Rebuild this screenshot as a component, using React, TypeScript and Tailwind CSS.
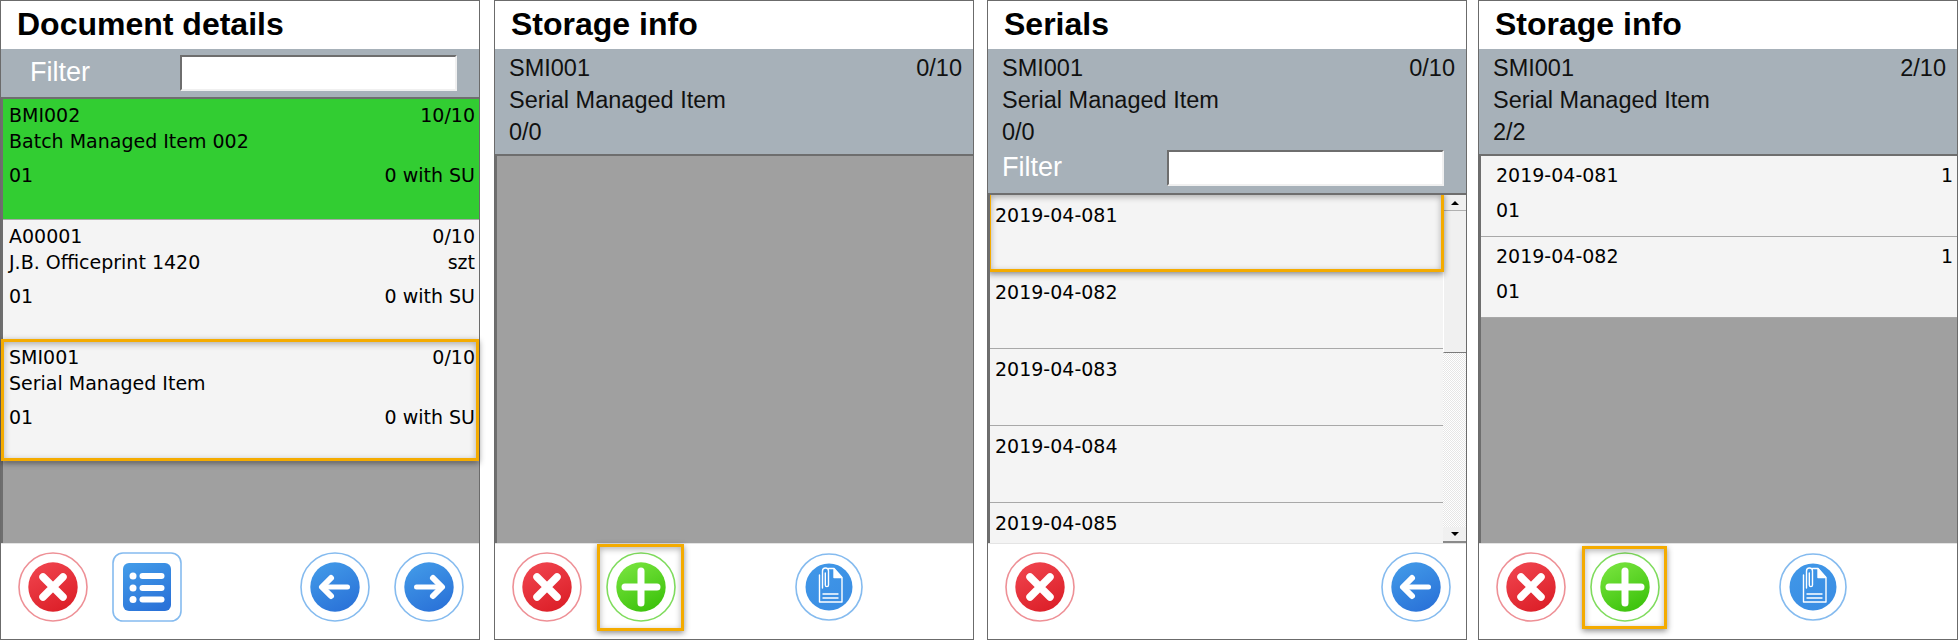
import type { ReactNode } from "react";

const tahoma = "font-['DejaVu_Sans',sans-serif] text-[19px] leading-[26px] text-black";
const arial = "font-['Liberation_Sans',Arial,sans-serif]";

const palette = {
  red: { ring: "#ee9096", from: "#f0444e", to: "#dc1f28" },
  green: { ring: "#80dc5e", from: "#78e43e", to: "#3cc20c" },
  blue: { ring: "#85bbef", from: "#429ae8", to: "#2a72d8" },
  flat: { ring: "#85bbef", from: "#4097e8", to: "#3a8de3" },
};

type Tone = keyof typeof palette;

const RoundIcon = ({ tone, id, outer = 34, inner = 24.7, children }: { tone: Tone; id: string; outer?: number; inner?: number; children: ReactNode }) => {
  const c = palette[tone];
  return (
    <svg viewBox="0 0 70 70" className="w-[70px] h-[70px] block shrink-0">
      <defs>
        <linearGradient id={id} x1="0.2" y1="0" x2="0.7" y2="1">
          <stop offset="0" stopColor={c.from} />
          <stop offset="1" stopColor={c.to} />
        </linearGradient>
      </defs>
      <circle cx="35" cy="35" r={outer} fill="#fff" stroke={c.ring} strokeWidth="1.6" />
      <circle cx="35" cy="35" r={inner} fill={`url(#${id})`} />
      {children}
    </svg>
  );
};

const CancelIcon = ({ id }: { id: string }) => (
  <RoundIcon tone="red" id={id}>
    <path d="M25 25 L45 45 M45 25 L25 45" stroke="#fff" strokeWidth="7.5" strokeLinecap="round" />
  </RoundIcon>
);

const AddIcon = ({ id }: { id: string }) => (
  <RoundIcon tone="green" id={id}>
    <path d="M35 19 V51 M19 35 H51" stroke="#fff" strokeWidth="7" strokeLinecap="round" />
  </RoundIcon>
);

const BackIcon = ({ id }: { id: string }) => (
  <RoundIcon tone="blue" id={id}>
    <g fill="none" stroke="#fff" strokeLinecap="round" strokeLinejoin="round">
      <path d="M31 26 L22 35 L31 44" strokeWidth="6" />
      <path d="M23 35 H47.5" strokeWidth="5" />
    </g>
  </RoundIcon>
);

const NextIcon = ({ id }: { id: string }) => (
  <RoundIcon tone="blue" id={id}>
    <g fill="none" stroke="#fff" strokeLinecap="round" strokeLinejoin="round">
      <path d="M39 26 L48 35 L39 44" strokeWidth="6" />
      <path d="M47 35 H22.5" strokeWidth="5" />
    </g>
  </RoundIcon>
);

const DocIcon = ({ id }: { id: string }) => (
  <RoundIcon tone="flat" id={id} outer={33} inner={23.5}>
    <g fill="none" stroke="#fff" strokeWidth="1.4" strokeLinejoin="round" strokeLinecap="round">
      <path d="M34.5 16.5 H40 L48 25.5 V50 H25.5 V23" />
      <path d="M40 17 L47.5 25.5 H40 Z" fill="#fff" />
      <path d="M28.5 36 V19 a3 3 0 0 1 6 0 V33 a1.6 1.6 0 0 1 -3.2 0 V21" />
      <path d="M29 42 H44 M29 46 H44" />
    </g>
  </RoundIcon>
);

const ListIcon = ({ id }: { id: string }) => (
  <svg viewBox="0 0 70 70" className="w-[70px] h-[70px] block shrink-0">
    <defs>
      <linearGradient id={id} x1="0.2" y1="0" x2="0.7" y2="1">
        <stop offset="0" stopColor="#429ae8" />
        <stop offset="1" stopColor="#2a72d8" />
      </linearGradient>
    </defs>
    <rect x="1" y="1" width="68" height="68" rx="10" fill="#fff" stroke="#85bbef" strokeWidth="1.6" />
    <rect x="11" y="11" width="48" height="48" rx="6" fill={`url(#${id})`} />
    <g fill="#fff">
      <circle cx="21" cy="24" r="3.5" />
      <circle cx="21" cy="36" r="3.5" />
      <circle cx="21" cy="47.5" r="3.5" />
      <rect x="27.5" y="21" width="25" height="6" rx="3" />
      <rect x="27.5" y="33" width="25" height="6" rx="3" />
      <rect x="27.5" y="44.5" width="25" height="6" rx="3" />
    </g>
  </svg>
);

const Panel = ({ title, children, footer }: { title: string; children: ReactNode; footer: ReactNode }) => (
  <div className="w-[480px] h-[640px] shrink-0 flex flex-col bg-white border border-[#6b6b6b]">
    <div className="h-[48px] shrink-0 pl-[16px] pb-[2px] flex items-center">
      <h1 className={`${arial} font-bold text-[32px] leading-none text-black`}>{title}</h1>
    </div>
    {children}
    <div className="h-[96px] shrink-0 flex items-start pt-[8px] border-t border-[#e4e4e4]">{footer}</div>
  </div>
);

const FilterRow = () => (
  <div className="flex items-center h-[45px]">
    <span className={`${arial} text-[27px] text-white`}>Filter</span>
    <div className="ml-auto mr-[22px] w-[277px] h-[36px] bg-white border-2 border-t-[#6e6e6e] border-l-[#6e6e6e] border-r-[#f0f0f0] border-b-[#f0f0f0]" />
  </div>
);

const ItemInfo = ({ count, progress }: { count: string; progress: string }) => (
  <div className={`${arial} text-[23.5px] leading-[32px] text-[#111] pt-[3px] pl-[14px] pr-[11px]`}>
    <div className="flex justify-between">
      <span>SMI001</span>
      <span>{count}</span>
    </div>
    <div>Serial Managed Item</div>
    <div>{progress}</div>
  </div>
);

type DocRow = { code: string; name: string; qty: string; unit?: string; green?: boolean; selected?: boolean };

const docRows: DocRow[] = [
  { code: "BMI002", name: "Batch Managed Item 002", qty: "10/10", green: true },
  { code: "A00001", name: "J.B. Officeprint 1420", qty: "0/10", unit: "szt" },
  { code: "SMI001", name: "Serial Managed Item", qty: "0/10", selected: true },
];

const Highlight = ({ className }: { className: string }) => (
  <span className={`absolute border-[3px] border-[#f4ab00] shadow-[0_2px_6px_rgba(0,0,0,0.45),inset_0_2px_6px_rgba(0,0,0,0.3)] pointer-events-none ${className}`} />
);

const DocumentRow = ({ row }: { row: DocRow }) => (
  <div className={`relative h-[121px] pt-[3px] pl-[6px] pr-[4px] border-b border-[#a8a8a8] ${row.green ? "bg-[#32cd32]" : "bg-[#f4f4f4]"} ${tahoma}`}>
    <div className="flex justify-between">
      <span>{row.code}</span>
      <span>{row.qty}</span>
    </div>
    <div className="flex justify-between">
      <span>{row.name}</span>
      <span>{row.unit}</span>
    </div>
    <div className="flex justify-between mt-[8px]">
      <span>01</span>
      <span>0 with SU</span>
    </div>
    {row.selected && <Highlight className="-left-[2px] right-0 -top-[2px] bottom-0" />}
  </div>
);

const serials = ["2019-04-081", "2019-04-082", "2019-04-083", "2019-04-084", "2019-04-085"];

const Scrollbar = () => (
  <div className="w-[23px] shrink-0 flex flex-col bg-[repeating-conic-gradient(#ffffff_0%_25%,#e6e6e6_0%_50%)] bg-[length:2px_2px]">
    <div className="h-[16px] shrink-0 bg-[#f0f0f0] border-b border-[#b0b0b0] flex items-center justify-center">
      <span className="w-0 h-0 border-x-[4px] border-x-transparent border-b-[4px] border-b-black" />
    </div>
    <div className="h-[142px] shrink-0 bg-[#f0f0f0] border-b border-[#7a7a7a] border-l border-l-white" />
    <div className="mt-auto h-[16px] shrink-0 bg-[#f0f0f0] border-b-2 border-[#8a8a8a] flex items-center justify-center">
      <span className="w-0 h-0 border-x-[4px] border-x-transparent border-t-[4px] border-t-black" />
    </div>
  </div>
);

const App = () => {
  return (
    <div className="flex w-[1958px] h-[640px] bg-white overflow-hidden">
      <Panel
        title="Document details"
        footer={
          <div className="flex w-full pl-[17px] pr-[15px] gap-[24px]">
            <CancelIcon id="a1" />
            <ListIcon id="a2" />
            <div className="ml-auto flex gap-[24px]">
              <BackIcon id="a3" />
              <NextIcon id="a4" />
            </div>
          </div>
        }
      >
        <div className="h-[48px] shrink-0 bg-[#a7b1b9] pl-[29px] pt-[1px]">
          <FilterRow />
        </div>
        <div className="flex-1 bg-[#a0a0a0] border-t-2 border-l-2 border-[#6e6e6e]">
          {docRows.map((row) => (
            <DocumentRow key={row.code} row={row} />
          ))}
        </div>
      </Panel>

      <div className="ml-[14px]">
        <Panel
          title="Storage info"
          footer={
            <div className="flex pl-[17px]">
              <CancelIcon id="b1" />
              <div className="relative ml-[24px]">
                <AddIcon id="b2" />
                <Highlight className="-left-[9px] -right-[8px] -top-[8px] -bottom-[9px]" />
              </div>
              <div className="ml-[118px]">
                <DocIcon id="b3" />
              </div>
            </div>
          }
        >
          <div className="h-[105px] shrink-0 bg-[#a7b1b9]">
            <ItemInfo count="0/10" progress="0/0" />
          </div>
          <div className="flex-1 bg-[#a0a0a0] border-t-2 border-l-2 border-[#6e6e6e]" />
        </Panel>
      </div>

      <div className="ml-[13px]">
        <Panel
          title="Serials"
          footer={
            <div className="flex w-full pl-[17px] pr-[15px]">
              <CancelIcon id="c1" />
              <div className="ml-auto">
                <BackIcon id="c2" />
              </div>
            </div>
          }
        >
          <div className="h-[144px] shrink-0 bg-[#a7b1b9]">
            <ItemInfo count="0/10" progress="0/0" />
            <div className="pl-[14px] -mt-[3px]">
              <FilterRow />
            </div>
          </div>
          <div className="flex-1 min-h-0 flex overflow-hidden bg-[#f4f4f4] border-t-2 border-l-2 border-[#6e6e6e]">
            <div className="flex-1 min-w-0">
              {serials.map((serial, i) => (
                <div key={serial} className={`relative h-[77px] shrink-0 pl-[5px] pt-[7px] border-b border-[#a8a8a8] ${tahoma}`}>
                  {serial}
                  {i === 0 && <Highlight className="-left-[2px] -right-[1px] -top-[3px] -bottom-[1px]" />}
                </div>
              ))}
            </div>
            <Scrollbar />
          </div>
        </Panel>
      </div>

      <div className="ml-[11px]">
        <Panel
          title="Storage info"
          footer={
            <div className="flex pl-[17px]">
              <CancelIcon id="d1" />
              <div className="relative ml-[24px]">
                <AddIcon id="d2" />
                <Highlight className="-left-[8px] -right-[7px] -top-[6px] -bottom-[7px]" />
              </div>
              <div className="ml-[118px]">
                <DocIcon id="d3" />
              </div>
            </div>
          }
        >
          <div className="h-[105px] shrink-0 bg-[#a7b1b9]">
            <ItemInfo count="2/10" progress="2/2" />
          </div>
          <div className="flex-1 bg-[#a0a0a0] border-t-2 border-l-2 border-[#6e6e6e]">
            {["2019-04-081", "2019-04-082"].map((serial) => (
              <div key={serial} className={`h-[81px] bg-[#f4f4f4] border-b border-[#a8a8a8] pl-[15px] pr-[4px] pt-[6px] ${tahoma}`}>
                <div className="flex justify-between">
                  <span>{serial}</span>
                  <span>1</span>
                </div>
                <div className="mt-[9px]">01</div>
              </div>
            ))}
          </div>
        </Panel>
      </div>
    </div>
  );
};

export default App;
